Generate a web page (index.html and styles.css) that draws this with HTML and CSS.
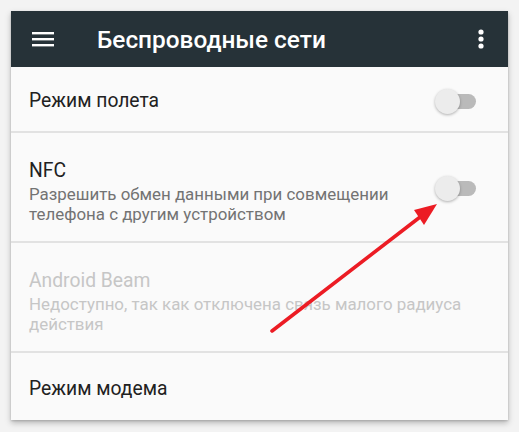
FILE: index.html
```html
<!DOCTYPE html>
<html lang="ru">
<head>
    <meta charset="UTF-8" />
    <title>Беспроводные сети</title>
    <meta name="viewport" content="width=device-width, initial-scale=1.0" />
    <link rel="stylesheet" href="styles.css">
</head>
<body>

    <div class="screen">
        <header class="toolbar">
            <svg class="menu-icon" width="22" height="16" viewBox="0 0 22 16">
                <rect x="0" y="1" width="22" height="2.4" fill="#fff" />
                <rect x="0" y="7" width="22" height="2.4" fill="#fff" />
                <rect x="0" y="13" width="22" height="2.4" fill="#fff" />
            </svg>
            <h1>Беспроводные сети</h1>
            <svg class="more-icon" width="6" height="20" viewBox="0 0 6 20">
                <circle cx="3" cy="3" r="2.6" fill="#fff" />
                <circle cx="3" cy="10" r="2.6" fill="#fff" />
                <circle cx="3" cy="17" r="2.6" fill="#fff" />
            </svg>
        </header>

        <div class="setting short">
            <div class="setting-text">
                <div class="title">Режим полета</div>
            </div>
            <span class="switch"></span>
        </div>

        <div class="setting tall">
            <div class="setting-text">
                <div class="title">NFC</div>
                <div class="summary">Разрешить обмен данными при совмещении телефона с другим устройством</div>
            </div>
            <span class="switch"></span>
        </div>

        <div class="setting tall disabled">
            <div class="setting-text">
                <div class="title">Android Beam</div>
                <div class="summary">Недоступно, так как отключена связь малого радиуса действия</div>
            </div>
        </div>

        <div class="setting short last">
            <div class="setting-text">
                <div class="title">Режим модема</div>
            </div>
        </div>

        <!-- pointer to the NFC toggle -->
        <svg class="pointer" width="519" height="432" viewBox="0 0 519 432">
            <line x1="272" y1="331" x2="424" y2="214" stroke="#ec1c24" stroke-width="3.6" stroke-linecap="round" />
            <polygon points="437,204 414,210 424,225" fill="#ec1c24" />
        </svg>
    </div>

</body>
</html>
```

FILE: styles.css
```css
* {
    box-sizing: border-box;
    margin: 0;
    padding: 0;
}

body {
    font-family: Roboto, 'Noto Sans', sans-serif;
    background: #f3f3f3;
    width: 519px;
    height: 432px;
    overflow: hidden;
}

.screen {
    margin: 11px 0 0 11px;
    width: 497px;
    height: 409px;
    background: #fafafa;
    box-shadow: 0 3px 6px rgba(0, 0, 0, 0.25), 0 1px 2px rgba(0, 0, 0, 0.15);
    display: flex;
    flex-direction: column;
}

.toolbar {
    height: 56px;
    background: #263238;
    display: flex;
    align-items: center;
    padding: 0 24px 0 21px;
    flex-shrink: 0;
}

.toolbar h1 {
    flex: 1;
    margin-left: 43px;
    font-size: 24.4px;
    font-weight: 500;
    color: #fff;
}

.setting {
    display: flex;
    align-items: center;
    padding: 4px 32px 0 18px;
    border-bottom: 2px solid #e2e2e2;
}

.setting.short {
    height: 66px;
}

.setting.tall {
    height: 110px;
    padding-top: 8px;
}

.setting.last {
    height: 67px;
    border-bottom: none;
}

.setting-text {
    flex: 1;
    padding-right: 20px;
}

.disabled .setting-text {
    padding-right: 0;
}

.title {
    font-size: 19.3px;
    color: #212121;
    line-height: 24px;
}

.summary {
    margin-top: 1px;
    font-size: 16.9px;
    line-height: 20px;
    color: #737373;
}

.disabled .title,
.disabled .summary {
    color: #c6c6c6;
}

.switch {
    position: relative;
    width: 36px;
    height: 15px;
    border-radius: 8px;
    background: #bababa;
    flex-shrink: 0;
}

.tall .switch {
    margin-top: -6px;
}

/* thumb sits over the track */
.switch::before {
    content: '';
    position: absolute;
    left: -5px;
    top: -5px;
    width: 25px;
    height: 25px;
    border-radius: 50%;
    background: #ececec;
    box-shadow: 0 1px 3px rgba(0, 0, 0, 0.3);
}

.pointer {
    position: absolute;
    left: 0;
    top: 0;
    pointer-events: none;
}
```
